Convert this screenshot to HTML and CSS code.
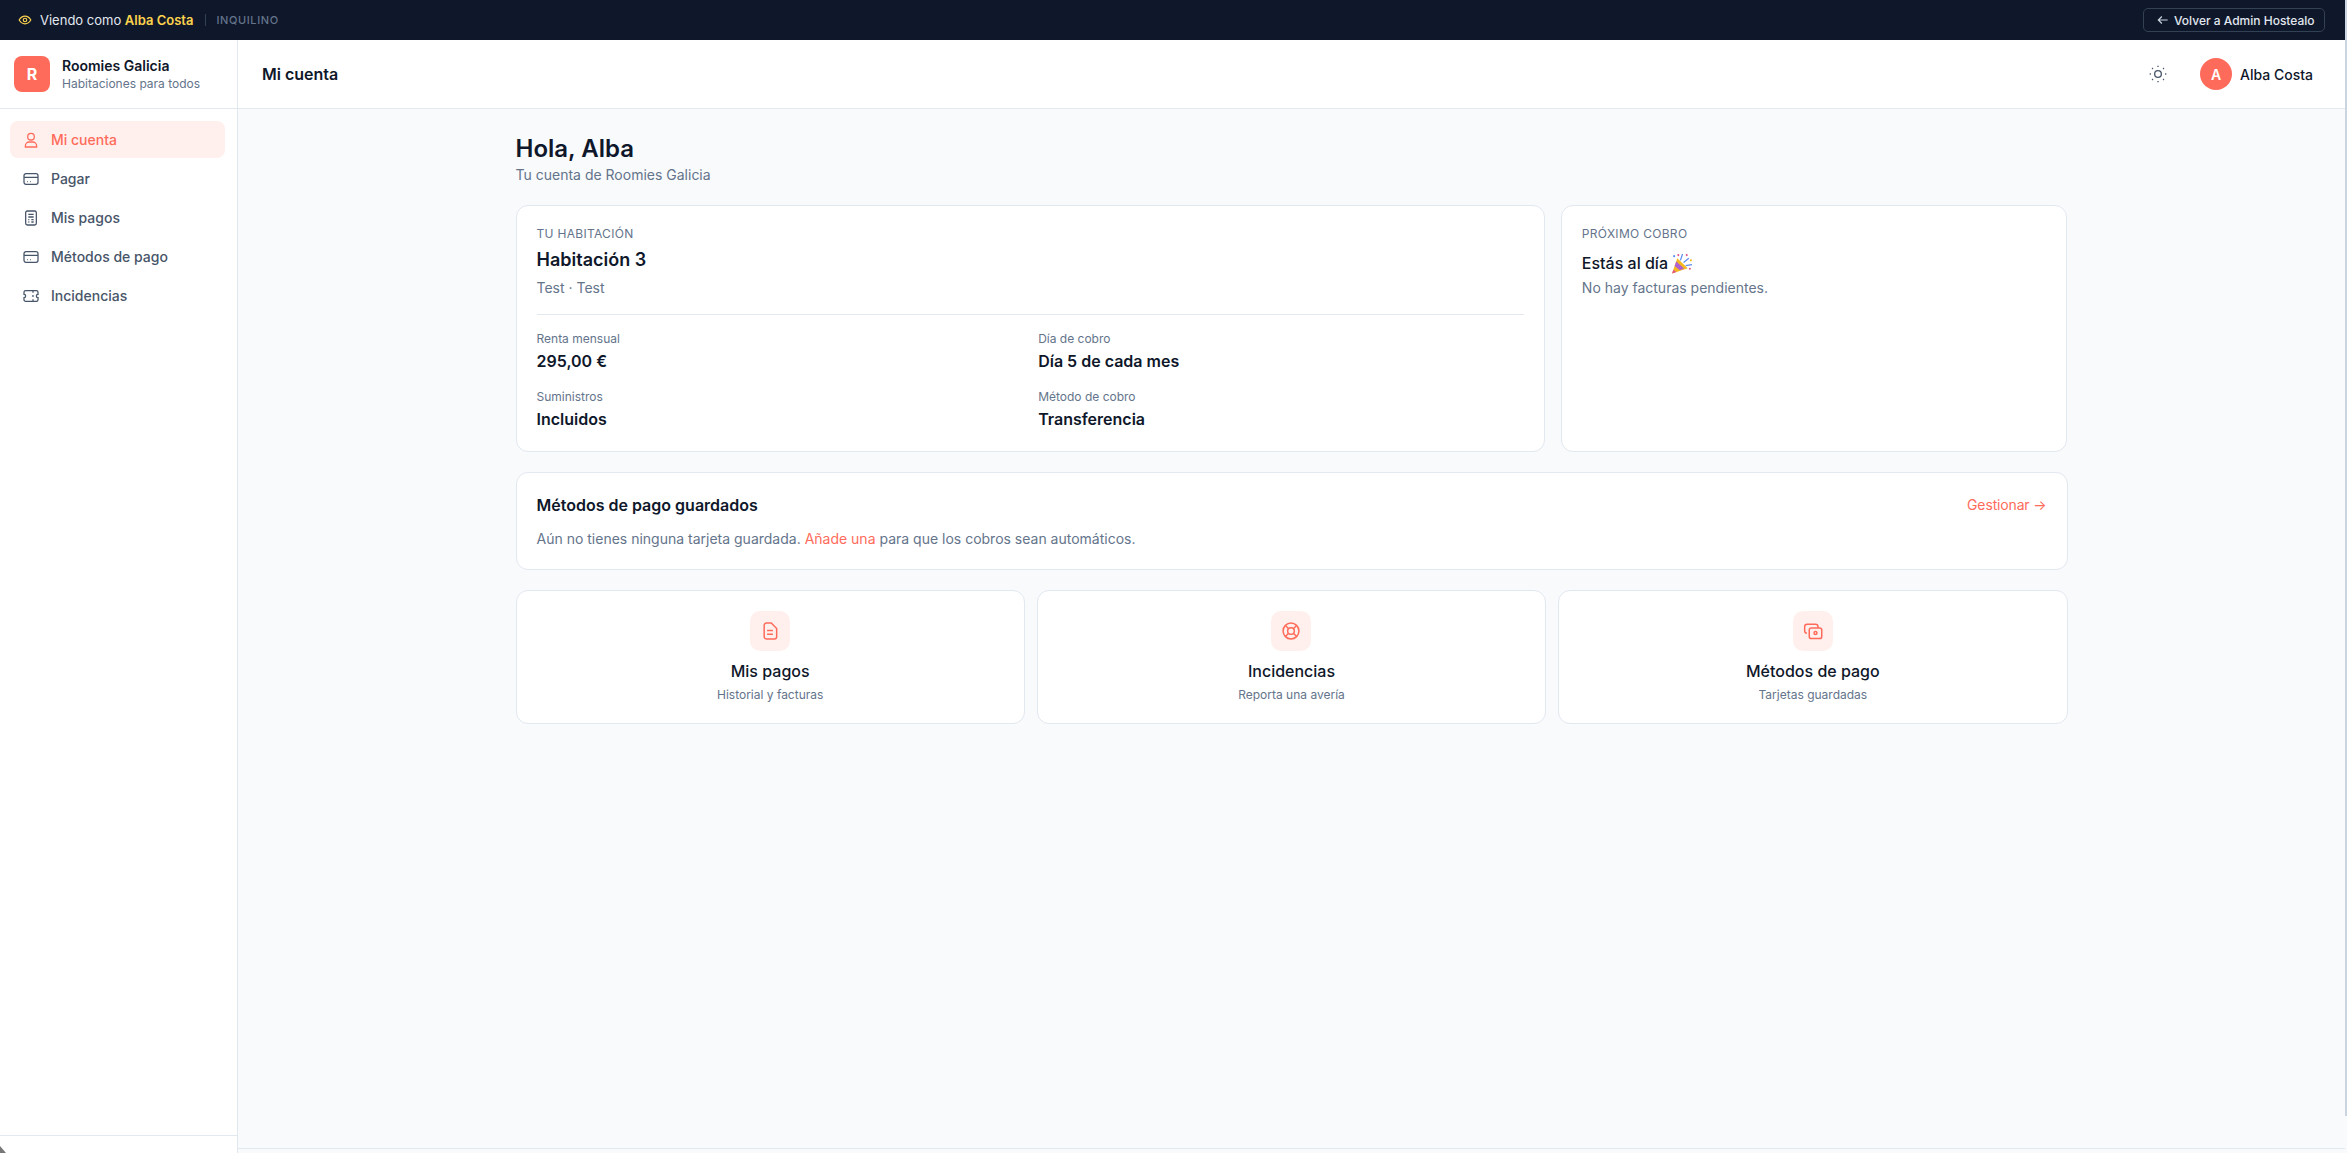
FILE: index.html
```html
<!DOCTYPE html>
<html lang="es">
<head>
<meta charset="utf-8">
<title>Mi cuenta · Roomies Galicia</title>
<link rel="stylesheet" href="styles.css">
</head>
<body>
<div class="app">
  <div class="impersonation">
    <div class="imp-left">
      <svg class="imp-eye" viewBox="0 0 24 24"><path d="M2 12c2.600-4.400 6-6.500 10-6.500s7.400 2.100 10 6.500c-2.600 4.400-6 6.500-10 6.500S4.600 16.400 2 12z"/><circle cx="12" cy="12" r="3"/></svg>
      <span class="imp-text">Viendo como <strong>Alba Costa</strong></span>
      <span class="imp-sep"></span>
      <span class="imp-role">INQUILINO</span>
    </div>
    <button class="imp-back"><svg viewBox="0 0 24 24"><path d="M20 12H4M10 6l-6 6 6 6"/></svg>Volver a Admin Hostealo</button>
  </div>
  <div class="shell">
    <aside class="sidebar">
      <div class="brand">
        <div class="brand-logo">R</div>
        <div class="brand-text">
          <div class="brand-name">Roomies Galicia</div>
          <div class="brand-sub">Habitaciones para todos</div>
        </div>
      </div>
      <nav class="nav">
        <a class="nav-item active"><svg viewBox="0 0 24 24"><circle cx="12" cy="7" r="5"/><path d="M3.500 22.500V21c0-3.300 2.700-6 6-6h5c3.300 0 6 2.700 6 6v1.500z"/></svg>Mi cuenta</a>
        <a class="nav-item"><svg viewBox="0 0 24 24"><rect x="1.500" y="4" width="21" height="16" rx="3"/><path d="M1.500 9.500h21M6 15.800h1M10.500 15.800h1"/></svg>Pagar</a>
        <a class="nav-item"><svg viewBox="0 0 24 24"><rect x="4" y="1.500" width="16" height="21" rx="2.500"/><path d="M8 6.500h8M8 10.500h8M8 14.500h1.500M12.500 14.500H16M8 18h1.500M12.500 18H16"/></svg>Mis pagos</a>
        <a class="nav-item"><svg viewBox="0 0 24 24"><rect x="1.500" y="4" width="21" height="16" rx="3"/><path d="M1.500 9.500h21M6 15.800h1M10.500 15.800h1"/></svg>Métodos de pago</a>
        <a class="nav-item"><svg viewBox="0 0 24 24"><path d="M4 4h16a2.500 2.500 0 0 1 2.500 2.500v3a2.500 2.500 0 0 0 0 5v3A2.500 2.500 0 0 1 20 20H4a2.500 2.500 0 0 1-2.500-2.500v-3a2.500 2.500 0 0 0 0-5v-3A2.500 2.500 0 0 1 4 4z"/><path d="M15 4v3M15 10.500v3M15 17v3"/></svg>Incidencias</a>
      </nav>
      <div class="sidebar-foot"></div>
    </aside>
    <div class="main">
      <header class="topbar">
        <h1 class="topbar-title">Mi cuenta</h1>
        <div class="topbar-right">
          <svg class="sun" viewBox="0 0 24 24"><circle cx="12" cy="12" r="4"/><path d="M12 2v1.500M12 20.500V22M2 12h1.500M20.500 12H22M4.900 4.900l1 1M18.100 18.100l1 1M4.900 19.100l1-1M18.100 5.900l1-1"/></svg>
          <div class="user">
            <div class="avatar">A</div>
            <span class="user-name">Alba Costa</span>
          </div>
        </div>
      </header>
      <main class="content">
        <div class="container">
          <h2 class="page-title">Hola, Alba</h2>
          <p class="page-sub">Tu cuenta de Roomies Galicia</p>
          <section class="summary">
            <div class="card room">
              <div class="eyebrow">TU HABITACIÓN</div>
              <div class="room-name">Habitación 3</div>
              <div class="muted mt4">Test · Test</div>
              <div class="facts">
                <div><div class="fact-label">Renta mensual</div><div class="fact-value">295,00 €</div></div>
                <div><div class="fact-label">Día de cobro</div><div class="fact-value">Día 5 de cada mes</div></div>
                <div><div class="fact-label">Suministros</div><div class="fact-value">Incluidos</div></div>
                <div><div class="fact-label">Método de cobro</div><div class="fact-value">Transferencia</div></div>
              </div>
            </div>
            <div class="card">
              <div class="eyebrow">PRÓXIMO COBRO</div>
              <div class="due-title">Estás al día
                <svg class="popper" viewBox="0 0 21 20" role="img" aria-label="🎉">
                  <path d="M1 19.500 6 5l10 9.500z" fill="#f5b81f"/>
                  <path d="M3.500 12.500 5 8l7.500 6.800-4 1.700z" fill="#b060d0"/>
                  <path d="M1 19.500l1.200-3.500 3 2.100z" fill="#e0568a"/>
                  <path d="M9 7l2-6M12 9l5-4M14 12l6-1" fill="none" stroke="#5b8def" stroke-width="1.200"/>
                  <circle cx="7" cy="2" r="1" fill="#e0568a"/><circle cx="15" cy="2" r="1" fill="#e0568a"/><circle cx="19" cy="7" r="1" fill="#f5b81f"/><circle cx="18" cy="15" r="1" fill="#e0568a"/><circle cx="3" cy="3" r="1" fill="#5b8def"/>
                </svg>
              </div>
              <div class="muted due-text">No hay facturas pendientes.</div>
            </div>
          </section>
          <section class="card methods">
            <div class="methods-head">
              <div class="methods-title">Métodos de pago guardados</div>
              <a class="link manage">Gestionar →</a>
            </div>
            <p class="muted methods-text">Aún no tienes ninguna tarjeta guardada. <a class="link">Añade una</a> para que los cobros sean automáticos.</p>
          </section>
          <section class="quick">
            <a class="card quick-card">
              <span class="quick-icon"><svg viewBox="0 0 24 24"><path d="M7.500 2.500h6L20 9v10a2.500 2.500 0 0 1-2.500 2.500h-10A2.500 2.500 0 0 1 5 19V5a2.500 2.500 0 0 1 2.500-2.500z"/><path d="M8.500 11.500h7M8.500 16h7"/></svg></span>
              <span class="quick-title">Mis pagos</span>
              <span class="quick-sub">Historial y facturas</span>
            </a>
            <a class="card quick-card">
              <span class="quick-icon"><svg viewBox="0 0 24 24"><circle cx="12" cy="12" r="9.500"/><circle cx="12" cy="12" r="4"/><path d="M5.300 5.300l3.900 3.900M14.800 14.800l3.900 3.900M18.700 5.300l-3.900 3.900M9.200 14.800l-3.900 3.900"/></svg></span>
              <span class="quick-title">Incidencias</span>
              <span class="quick-sub">Reporta una avería</span>
            </a>
            <a class="card quick-card">
              <span class="quick-icon"><svg viewBox="0 0 24 24"><path d="M4.800 14.500A2.500 2.500 0 0 1 2 12V7a3 3 0 0 1 3-3h10a3 3 0 0 1 3 3v1.500"/><rect x="7.500" y="8.500" width="15" height="12.500" rx="2.500"/><circle cx="15" cy="14.500" r="1.800"/></svg></span>
              <span class="quick-title">Métodos de pago</span>
              <span class="quick-sub">Tarjetas guardadas</span>
            </a>
          </section>
        </div>
      </main>
      <div class="main-foot"></div>
    </div>
  </div>
</div>
<div class="scroll-thumb"></div>
<svg class="cursor-tip" viewBox="0 0 6 7"><path d="M0 0l6 7H0z"/></svg>
</body>
</html>
```
FILE: styles.css
```css
* { box-sizing: border-box; }
html, body { margin: 0; height: 100%; overflow: hidden; }
body {
  font-family: Inter, "Noto Sans", sans-serif;
  color: #0f172a;
  background: #f8fafc;
  font-size: 14px;
  position: relative;
}
h1, h2, p { margin: 0; }
.app { height: 100%; width: calc(100% - 2px); display: flex; flex-direction: column; }

.impersonation {
  height: 40px; flex: none;
  background: #0f172a;
  display: flex; align-items: center; justify-content: space-between;
  padding: 0 20px 0 18px;
}
.imp-left { display: flex; align-items: center; }
.imp-eye { width: 14px; height: 14px; fill: none; stroke: #fcd34d; stroke-width: 2; margin-right: 8px; }
.imp-text { font-size: 13px; color: #e2e8f0; line-height: 16px; }
.imp-text strong { color: #fcd34d; font-weight: 570; }
.imp-sep { width: 1px; height: 12px; background: #334155; margin: 0 10px 0 12px; }
.imp-role { font-size: 11px; letter-spacing: 0.6px; color: #64748b; font-weight: 470; }
.imp-back {
  height: 24px; width: 182px;
  display: flex; align-items: center; gap: 4px;
  padding: 0 12px;
  background: transparent;
  border: 1px solid #334155; border-radius: 5px;
  color: #e2e8f0; font: 470 12px Inter, sans-serif;
  white-space: nowrap;
}
.imp-back svg { width: 14px; height: 14px; fill: none; stroke: #cbd5e1; stroke-width: 2; flex: none; }

.shell { flex: 1; display: flex; min-height: 0; }
.sidebar {
  width: 238px; flex: none;
  background: #fff;
  border-right: 1px solid #e2e8f0;
  display: flex; flex-direction: column;
}
.brand {
  height: 69px; flex: none;
  border-bottom: 1px solid #e2e8f0;
  display: flex; align-items: center; gap: 12px;
  padding: 0 14px;
}
.brand-logo {
  width: 36px; height: 36px; border-radius: 8px;
  background: #ff6b5b; color: #fff;
  display: flex; align-items: center; justify-content: center;
  font-weight: 650; font-size: 16px;
}
.brand-name { font-size: 14px; font-weight: 570; line-height: 18px; }
.brand-sub { font-size: 12px; color: #64748b; line-height: 16px; margin-top: 1px; }
.nav { flex: 1; padding: 12px 12px 0 10px; display: flex; flex-direction: column; gap: 2px; }
.nav-item {
  height: 37px;
  display: flex; align-items: center; gap: 12px;
  padding-left: 13px;
  border-radius: 8px;
  color: #475569; font-size: 14px; font-weight: 470;
}
.nav-item svg { width: 16px; height: 16px; fill: none; stroke: currentColor; stroke-width: 1.900; flex: none; }
.nav-item.active { background: #fff0ed; color: #ff6b5b; }
.sidebar-foot { height: 18px; flex: none; border-top: 1px solid #e2e8f0; }

.main { flex: 1; min-width: 0; display: flex; flex-direction: column; }
.topbar {
  height: 69px; flex: none;
  background: #fff;
  border-bottom: 1px solid #e2e8f0;
  display: flex; align-items: center; justify-content: space-between;
  padding: 0 32px 0 24px;
}
.topbar-title { font-size: 16px; font-weight: 570; }
.topbar-right { display: flex; align-items: center; gap: 32px; }
.sun { width: 20px; height: 20px; fill: none; stroke: #475569; stroke-width: 1.600; }
.user { display: flex; align-items: center; gap: 8px; }
.avatar {
  width: 32px; height: 32px; border-radius: 50%;
  background: #ff6b5b; color: #fff;
  display: flex; align-items: center; justify-content: center;
  font-weight: 570; font-size: 14px;
}
.user-name { font-size: 14px; font-weight: 470; }

.content { flex: 1; min-height: 0; padding-top: 24px; }
.container { width: 1552px; margin: 0 auto; }
.page-title { font-size: 24px; line-height: 32px; font-weight: 570; }
.page-sub { font-size: 14px; line-height: 20px; color: #64748b; margin-bottom: 20px; }
.main-foot { height: 5px; flex: none; border-top: 1px solid #e2e8f0; }

.card {
  background: #fff;
  border: 1px solid #e2e8f0;
  border-radius: 12px;
  padding: 20px;
}
.summary { display: grid; grid-template-columns: repeat(3, 1fr); gap: 16px; }
.room { grid-column: span 2; }
.eyebrow { font-size: 12px; line-height: 16px; color: #64748b; letter-spacing: 0.3px; }
.room-name { font-size: 18px; line-height: 28px; font-weight: 570; margin-top: 4px; }
.muted { font-size: 14px; line-height: 20px; color: #64748b; }
.mt4 { margin-top: 4px; }
.facts {
  margin-top: 16px; padding-top: 16px;
  border-top: 1px solid #e2e8f0;
  display: grid; grid-template-columns: 1fr 1fr; gap: 16px;
}
.fact-label { font-size: 12px; line-height: 16px; color: #64748b; }
.fact-value { font-size: 16px; line-height: 24px; font-weight: 570; margin-top: 2px; }
.due-title {
  font-size: 16px; line-height: 24px; font-weight: 470; margin-top: 9px;
  display: flex; align-items: center; gap: 3px;
}
.due-text { margin-top: 3px; }
.popper { width: 22px; height: 21px; flex: none; }

.methods { margin-top: 20px; }
.methods-head { display: flex; align-items: flex-start; justify-content: space-between; }
.methods-title { font-size: 16px; line-height: 24px; font-weight: 570; }
.link { color: #ff6b5b; font-size: 14px; font-weight: 400; }
.manage { line-height: 23px; letter-spacing: -0.15px; }
.methods-text { margin-top: 12px; }

.quick { margin-top: 20px; display: grid; grid-template-columns: repeat(3, 1fr); gap: 12px; }
.quick-card { display: flex; flex-direction: column; align-items: center; }
.quick-icon {
  width: 40px; height: 40px; border-radius: 10px;
  background: #fff0ed;
  display: flex; align-items: center; justify-content: center;
}
.quick-icon svg { width: 20px; height: 20px; fill: none; stroke: #ff6b5b; stroke-width: 1.800; }
.quick-title { font-size: 16px; line-height: 24px; font-weight: 470; margin-top: 8px; }
.quick-sub { font-size: 12px; line-height: 16px; color: #64748b; margin-top: 4px; }

.scroll-thumb { position: absolute; top: 0; right: 0; width: 2px; height: 1116px; background: #cbd5e1; }
.cursor-tip { position: absolute; left: 0; bottom: 0; width: 6px; height: 7px; fill: #777; }
```
